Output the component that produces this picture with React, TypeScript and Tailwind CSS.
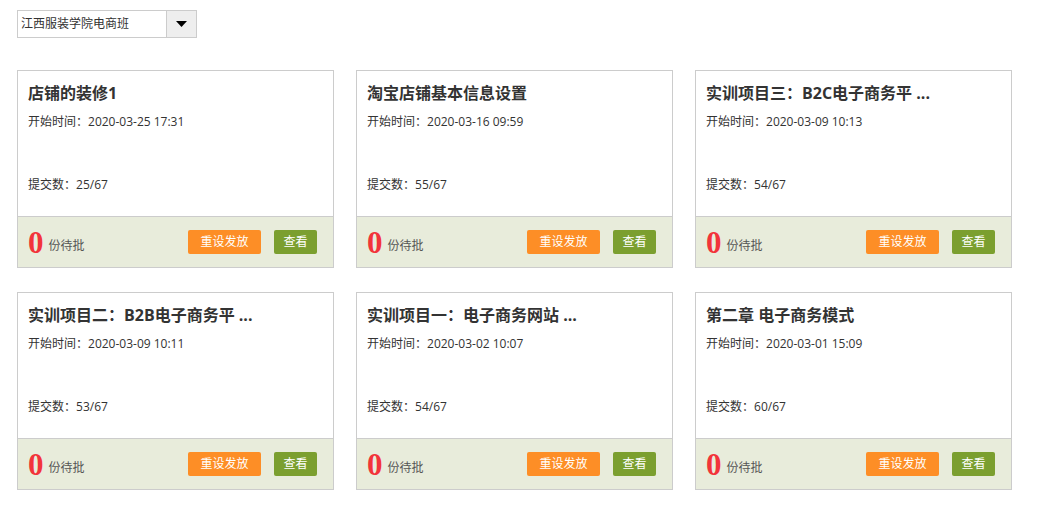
import React from 'react';

interface Task {
  title: string;
  startTime: string;
  submitted: string;
  pending: number;
}

const TASKS: Task[] = [
  { title: '店铺的装修1', startTime: '2020-03-25 17:31', submitted: '25/67', pending: 0 },
  { title: '淘宝店铺基本信息设置', startTime: '2020-03-16 09:59', submitted: '55/67', pending: 0 },
  { title: '实训项目三：B2C电子商务平 ...', startTime: '2020-03-09 10:13', submitted: '54/67', pending: 0 },
  { title: '实训项目二：B2B电子商务平 ...', startTime: '2020-03-09 10:11', submitted: '53/67', pending: 0 },
  { title: '实训项目一：电子商务网站 ...', startTime: '2020-03-02 10:07', submitted: '54/67', pending: 0 },
  { title: '第二章 电子商务模式', startTime: '2020-03-01 15:09', submitted: '60/67', pending: 0 },
];

const FONT = { fontFamily: '"Microsoft YaHei", "Open Sans", "Noto Sans CJK SC", sans-serif' };

const TaskCard = ({ task }: { task: Task }) => (
  <div className="flex h-[198px] w-[317px] flex-col border border-[#cccccc] bg-white">
    {/* Body */}
    <div className="flex flex-1 flex-col px-[10px] pb-[21px] pt-[10px] text-[#333333]">
      <div className="text-[16px] font-bold leading-[24px]">{task.title}</div>
      <div className="mt-[7px] text-[12px] leading-[20px]">开始时间：{task.startTime}</div>
      <div className="mt-auto text-[12px] leading-[20px]">提交数：{task.submitted}</div>
    </div>

    {/* Footer */}
    <div className="flex h-[51px] items-center border-t border-[#cccccc] bg-[#e8ecdb] pl-[10px] pr-[16px]">
      <span
        className="text-[31px] font-bold leading-none text-[#f2343a]"
        style={{ fontFamily: '"Liberation Serif", "DejaVu Serif", serif' }}
      >
        {task.pending}
      </span>
      <span className="ml-[5px] mt-[8px] text-[12px] text-[#555555]">份待批</span>
      <button className="ml-auto h-[24px] w-[73px] rounded-[2px] bg-[#fd8e26] text-[12px] text-white">
        重设发放
      </button>
      <button className="ml-[13px] h-[24px] w-[43px] rounded-[2px] bg-[#7b9f2f] text-[12px] text-white">
        查看
      </button>
    </div>
  </div>
);

export default function App() {
  return (
    <div className="min-h-[511px] bg-white px-[17px] pt-[10px]" style={FONT}>
      {/* Class select */}
      <div className="flex h-[28px] w-[180px] border border-[#cccccc]">
        <div className="flex flex-1 items-center pl-[3px] text-[12px] text-[#333333]">江西服装学院电商班</div>
        <div className="flex w-[30px] items-center justify-center border-l border-[#cccccc] bg-[#eeeeee]">
          <svg width="11" height="6" viewBox="0 0 11 6">
            <path d="M0 0 H11 L5.5 6 Z" fill="#000000" />
          </svg>
        </div>
      </div>

      {/* Task cards */}
      <div className="mt-[32px] grid w-[995px] grid-cols-[317px_317px_317px] gap-x-[22px] gap-y-[24px]">
        {TASKS.map((task, index) => (
          <TaskCard key={`${task.title}-${index}`} task={task} />
        ))}
      </div>
    </div>
  );
}
